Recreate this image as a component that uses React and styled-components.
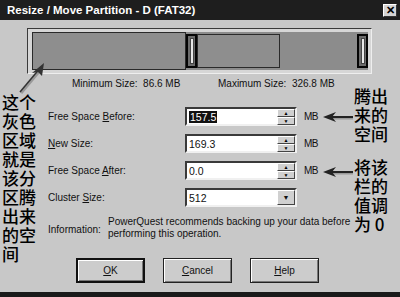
import styled, { createGlobalStyle } from "styled-components";

const Global = createGlobalStyle`
  html, body { margin: 0; padding: 0; background: #c8c8c8; }
  * { box-sizing: border-box; }
`;

const Window = styled.div`
  position: relative;
  width: 400px;
  height: 297px;
  background: #c8c8c8;
  font-family: "Liberation Sans", Arial, sans-serif;
  font-size: 10px;
  color: #111;
  display: flex;
  flex-direction: column;
  border-bottom: 5px solid #1a1a1a;
  overflow: hidden;
`;

const TitleBar = styled.div`
  height: 20px;
  background: #1e1e1e;
  color: #fff;
  display: flex;
  align-items: center;
  justify-content: space-between;
  padding: 0 3px 0 7px;
  font-weight: bold;
  font-size: 11.5px;
`;

const CloseBtn = styled.div`
  width: 14px;
  height: 13px;
  background: #d4d4d4;
  border: 1px solid;
  border-color: #fff #333 #333 #fff;
  color: #000;
  font-size: 11px;
  line-height: 10px;
  text-align: center;
`;

const Body = styled.div`
  flex: 1;
  padding: 8px 0 0 27px;
  display: flex;
  flex-direction: column;
`;

const BarFrame = styled.div`
  width: 345px;
  height: 46px;
  border: 1px solid;
  border-color: #3a3a3a #eee #eee #3a3a3a;
  padding: 3px 3px 3px 4px;
  background: #d6d6d6;
`;

const BarInner = styled.div`
  height: 100%;
  display: flex;
  background: #8c8c8c;
`;

const FreeRegion = styled.div`
  width: 154px;
  border: 1px solid #2a2a2a;
  background: #8e8e8e;
`;

const PartRegion = styled.div`
  flex: 1;
  display: flex;
  padding: 2px 0;
`;

const Handle = styled.div`
  width: 11px;
  border: 2px solid #050505;
  background: #6c6c6c;
  display: flex;
  justify-content: center;
  padding: 2px 0;
`;

const HandleBar = styled.div`
  width: 4px;
  background: #e8e8e8;
  border: 1px solid #444;
`;

const DataBox = styled.div`
  width: 83px;
  border: 1px solid #2a2a2a;
  background: #8e8e8e;
`;

const Spacer = styled.div`
  flex: 1;
`;

const SizeLine = styled.div`
  display: flex;
  padding: 4px 0 0 45px;
  height: 18px;
`;

const SizeText = styled.span`
  width: ${(p) => p.$w}px;
  white-space: pre;
`;

const Form = styled.div`
  margin-top: 15px;
  padding-left: 21px;
  display: grid;
  grid-template-columns: 137px 112px auto;
  row-gap: 8px;
  align-items: center;
`;

const Label = styled.span`
  white-space: nowrap;
`;

const Key = styled.span`
  text-decoration: underline;
`;

const Field = styled.div`
  height: 19px;
  background: #fff;
  border: 2px solid;
  border-color: #3a3a3a #f0f0f0 #f0f0f0 #3a3a3a;
  display: flex;
  align-items: stretch;
  font-size: 10.5px;
`;

const Value = styled.div`
  flex: 1;
  display: flex;
  align-items: center;
  padding-left: 2px;
`;

const Selected = styled.span`
  background: #111;
  color: #fff;
  padding: 0 1px;
`;

const Spin = styled.div`
  width: 18px;
  display: flex;
  flex-direction: column;
`;

const SpinBtn = styled.div`
  flex: 1;
  background: #d0d0d0;
  border: 1px solid;
  border-color: #fff #444 #444 #fff;
  font-size: 5px;
  line-height: 6px;
  text-align: center;
  color: #000;
`;

const DropBtn = styled.div`
  width: 18px;
  background: #d0d0d0;
  border: 1px solid;
  border-color: #fff #444 #444 #fff;
  font-size: 7px;
  display: flex;
  align-items: center;
  justify-content: center;
`;

const Unit = styled.span`
  padding-left: 7px;
  letter-spacing: -0.5px;
`;

const InfoRow = styled.div`
  display: flex;
  margin-top: 9px;
  padding-left: 21px;
  align-items: center;
`;

const InfoLabel = styled.span`
  width: 60px;
  padding-top: 2px;
`;

const InfoText = styled.p`
  margin: 0;
  width: 250px;
  line-height: 12px;
`;

const Buttons = styled.div`
  display: flex;
  gap: 18px;
  margin-top: 18px;
  padding-left: 49px;
`;

const Button = styled.div`
  width: 69px;
  height: 25px;
  display: flex;
  align-items: center;
  justify-content: center;
  background: #cccccc;
  border: ${(p) => (p.$default ? "2px solid #111" : "1px solid #222")};
  box-shadow: inset 1px 1px 0 #fff, inset -1px -1px 0 #777;
`;

const Note = styled.div`
  position: absolute;
  top: ${(p) => p.$top}px;
  left: ${(p) => p.$left}px;
  width: 36px;
  font-family: "Noto Sans CJK SC", sans-serif;
  font-weight: 500;
  font-size: 17px;
  line-height: 19px;
  color: #000;
`;

const Arrow = styled.svg`
  position: absolute;
  top: ${(p) => p.$top}px;
  left: ${(p) => p.$left}px;
  overflow: visible;
`;

const SpinField = ({ children }) => (
  <Field>
    <Value>{children}</Value>
    <Spin>
      <SpinBtn>▲</SpinBtn>
      <SpinBtn>▼</SpinBtn>
    </Spin>
  </Field>
);

const LeftArrow = ({ top, left }) => (
  <Arrow $top={top} $left={left} width="30" height="10">
    <line x1="8" y1="6" x2="30" y2="6" stroke="#999" strokeWidth="3" />
    <line x1="8" y1="5" x2="30" y2="5" stroke="#222" strokeWidth="2" />
    <polygon points="0,5 13,0 9,5 13,10" fill="#222" />
  </Arrow>
);

export default function App() {
  return (
    <>
      <Global />
      <Window>
        <TitleBar>
          <span>Resize / Move Partition - D (FAT32)</span>
          <CloseBtn>✕</CloseBtn>
        </TitleBar>
        <Body>
          <BarFrame>
            <BarInner>
              <FreeRegion />
              <PartRegion>
                <Handle>
                  <HandleBar />
                </Handle>
                <DataBox />
                <Spacer />
                <Handle>
                  <HandleBar />
                </Handle>
              </PartRegion>
            </BarInner>
          </BarFrame>
          <SizeLine>
            <SizeText $w={146}>Minimum Size:  86.6 MB</SizeText>
            <SizeText $w={130}>Maximum Size:  326.8 MB</SizeText>
          </SizeLine>
          <Form>
            <Label>
              Free Space <Key>B</Key>efore:
            </Label>
            <SpinField>
              <Selected>157.5</Selected>
            </SpinField>
            <Unit>MB</Unit>

            <Label>
              <Key>N</Key>ew Size:
            </Label>
            <SpinField>169.3</SpinField>
            <Unit>MB</Unit>

            <Label>
              Free Space <Key>A</Key>fter:
            </Label>
            <SpinField>0.0</SpinField>
            <Unit>MB</Unit>

            <Label>
              Cluster <Key>S</Key>ize:
            </Label>
            <Field>
              <Value>512</Value>
              <DropBtn>▼</DropBtn>
            </Field>
            <span />
          </Form>
          <InfoRow>
            <InfoLabel>Information:</InfoLabel>
            <InfoText>
              PowerQuest recommends backing up your data before performing this
              operation.
            </InfoText>
          </InfoRow>
          <Buttons>
            <Button $default>
              <span>
                <Key>O</Key>K
              </span>
            </Button>
            <Button>
              <span>
                <Key>C</Key>ancel
              </span>
            </Button>
            <Button>
              <span>
                <Key>H</Key>elp
              </span>
            </Button>
          </Buttons>
        </Body>

        <Note $top={92} $left={2}>
          这个灰色区域就是该分区腾出来的空间
        </Note>
        <Note $top={86} $left={354}>
          腾出来的空间
        </Note>
        <Note $top={157} $left={354}>
          将该栏的值调为 0
        </Note>
        <Arrow $top={62} $left={18} width="30" height="32">
          <line x1="3" y1="31" x2="24" y2="6" stroke="#999" strokeWidth="3" />
          <line x1="2" y1="30" x2="23" y2="5" stroke="#333" strokeWidth="1.5" />
          <polygon points="26,1 24,14 20,10 14,11" fill="#333" />
        </Arrow>
        <LeftArrow top={112} left={323} />
        <LeftArrow top={167} left={323} />
      </Window>
    </>
  );
}
